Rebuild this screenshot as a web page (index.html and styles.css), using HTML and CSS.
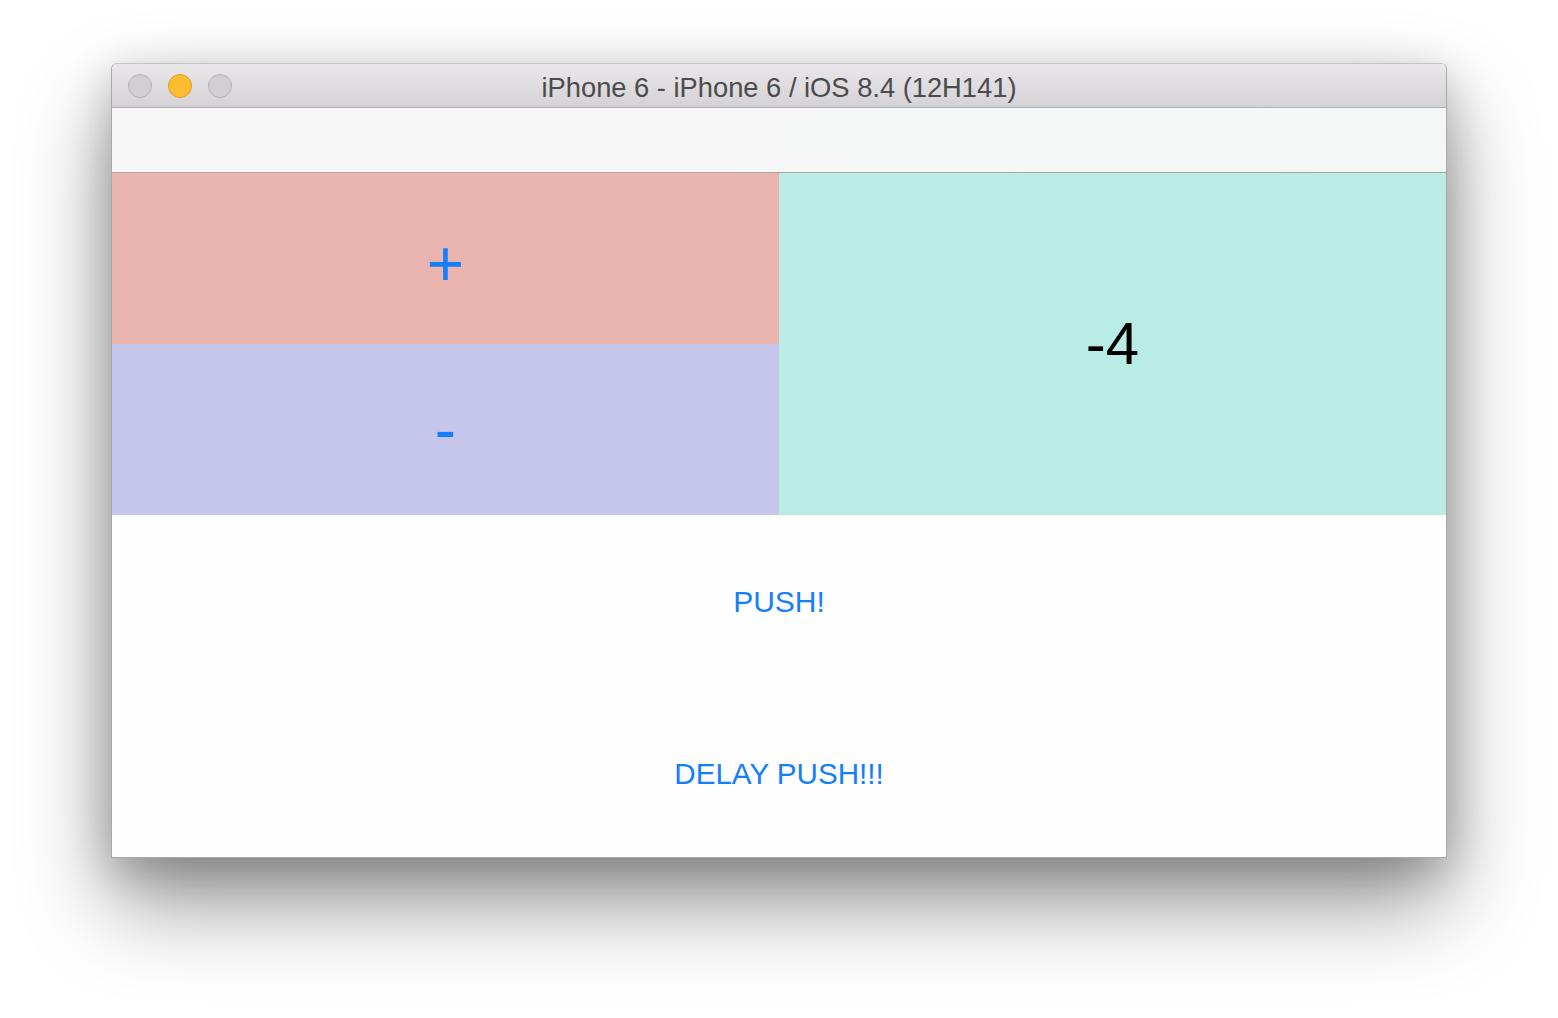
FILE: index.html
```
<!DOCTYPE html>
<html>
<head>
<meta charset="utf-8">
<link rel="stylesheet" href="styles.css">
</head>
<body>
<div class="window">
  <div class="titlebar">
    <div class="lights">
      <span class="light gray"></span>
      <span class="light yellow"></span>
      <span class="light gray"></span>
    </div>
    <div class="title">iPhone 6 - iPhone 6 / iOS 8.4 (12H141)</div>
    <div class="spacer"></div>
  </div>
  <div class="navbar"></div>
  <div class="panels">
    <div class="buttons">
      <div class="btn plus"><span class="plus-label">+</span></div>
      <div class="btn minus"><span class="minus-label">-</span></div>
    </div>
    <div class="counter">-4</div>
  </div>
  <div class="actions">
    <div class="action first">PUSH!</div>
    <div class="action second">DELAY PUSH!!!</div>
  </div>
</div>
</body>
</html>
```
FILE: styles.css
```
html, body {
  margin: 0;
  background: #ffffff;
}
body {
  padding: 63px 0 0 111px;
  height: 1018px;
  box-sizing: border-box;
  overflow: hidden;
  font-family: "Liberation Sans", Arial, sans-serif;
}
.window {
  width: 1336px;
  box-sizing: border-box;
  border: 1px solid #a9a9a9;
  border-top-color: #c4c4c4;
  border-radius: 6px 6px 0 0;
  display: flex;
  flex-direction: column;
  box-shadow: 0 45px 90px rgba(0, 0, 0, 0.42), 0 12px 45px rgba(0, 0, 0, 0.2);
  background: #fff;
}
.titlebar {
  height: 43px;
  border-bottom: 1px solid #b0aeb0;
  background: linear-gradient(#e9e7e9, #d4d2d4);
  border-radius: 5px 5px 0 0;
  display: grid;
  grid-template-columns: 1fr auto 1fr;
  align-items: center;
}
.lights {
  display: flex;
  gap: 16px;
  padding-left: 16px;
}
.light {
  width: 24px;
  height: 24px;
  border-radius: 50%;
  box-sizing: border-box;
}
.light.gray {
  background: #d1cfd1;
  border: 1px solid #b6b4b6;
}
.light.yellow {
  background: #febc30;
  border: 1px solid #df9f22;
}
.title {
  font-size: 27.3px;
  color: #4b4b4b;
  padding-top: 5px;
}
.navbar {
  height: 64px;
  border-bottom: 1px solid #a9a2a0;
  background: linear-gradient(90deg, #f8f7f7, #f5f7f7);
}
.panels {
  display: flex;
  height: 342px;
}
.buttons {
  flex: 1;
  display: flex;
  flex-direction: column;
}
.btn {
  flex: 1;
  display: flex;
  align-items: center;
  justify-content: center;
  color: #157efb;
  font-size: 64px;
  line-height: 1;
}
.plus {
  background: #ebb5af;
}
.plus-label {
  padding-top: 10px;
}
.minus {
  background: #c6c6ec;
}
.counter {
  flex: 1;
  background: #b8ece4;
  display: flex;
  align-items: center;
  justify-content: center;
  font-size: 60px;
  line-height: 1;
  color: #000;
}
.actions {
  height: 342px;
  display: flex;
  flex-direction: column;
  background: #fefefe;
}
.action {
  flex: 1;
  display: flex;
  align-items: center;
  justify-content: center;
  color: #157efb;
  font-size: 30px;
}
.action.first {
  padding-top: 4px;
}
.action.second {
  padding-top: 6px;
  font-size: 29.6px;
}
```
